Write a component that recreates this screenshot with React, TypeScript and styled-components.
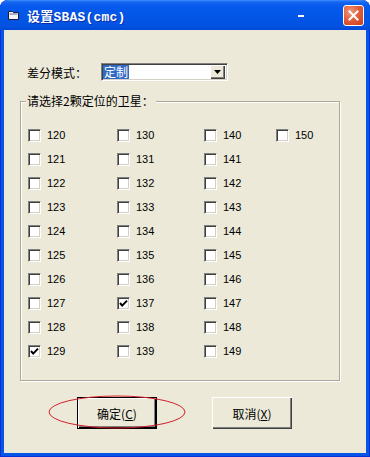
import React from 'react';
import styled, { createGlobalStyle } from 'styled-components';

const Global = createGlobalStyle`
  html, body { margin: 0; padding: 0; background: #ffffff; }
  body { width: 370px; height: 457px; overflow: hidden; font-family: "Noto Sans CJK SC", "Liberation Sans", sans-serif; }
  * { box-sizing: border-box; }
`;

const Window = styled.div`
  width: 370px;
  height: 457px;
  display: flex;
  flex-direction: column;
  padding: 0 4px 4px 4px;
  background: #0655E6;
  border-radius: 8px 8px 0 0;
  box-shadow: inset 1px 0 #0831D9, inset -1px 0 #0831D9, inset 0 -1px #0831D9;
  overflow: hidden;
`;

const TitleBar = styled.div`
  height: 30px;
  margin: 0 -4px;
  padding: 0 6px 0 6px;
  display: flex;
  align-items: center;
  border-radius: 8px 8px 0 0;
  background: linear-gradient(to bottom, #3D8EFF 0px, #1666F0 2px, #0659EC 6px, #0256E8 16px, #0352E2 26px, #0049D8 30px);
`;

const TitleIcon = styled.span`
  width: 16px;
  height: 16px;
  display: flex;
  align-items: center;
  justify-content: center;
  margin-right: 5px;
`;

const TitleText = styled.span`
  flex: 1;
  color: #ffffff;
  font-family: "Liberation Mono", "Noto Sans CJK SC", monospace;
  font-weight: bold;
  font-size: 13px;
  letter-spacing: 0.2px;
  text-shadow: 1px 1px 0 #0A2FA8;
  white-space: nowrap;
`;

const MinDash = styled.span`
  width: 6px;
  height: 2px;
  background: #ffffff;
  margin-right: 39px;
  margin-top: 2px;
`;

const CloseBtn = styled.span`
  width: 21px;
  height: 21px;
  border: 1px solid #ffffff;
  border-radius: 3px;
  display: flex;
  align-items: center;
  justify-content: center;
  background: radial-gradient(circle at 35% 30%, #F09A7C 0%, #E2603E 45%, #C8391A 100%);
`;

const Client = styled.div`
  flex: 1;
  background: #ECE9D8;
  display: flex;
  flex-direction: column;
  padding: 33px 0 0 0;
`;

const ModeRow = styled.div`
  display: flex;
  align-items: center;
  height: 18px;
  padding-left: 23px;
`;

const Label = styled.span`
  width: 74px;
  font-size: 12px;
  color: #000000;
  white-space: nowrap;
`;

const Combo = styled.div`
  width: 127px;
  height: 18px;
  display: flex;
  align-items: center;
  background: #ffffff;
  border-top: 1px solid #808080;
  border-left: 1px solid #808080;
  border-right: 1px solid #ffffff;
  border-bottom: 1px solid #ffffff;
  box-shadow: inset 1px 1px #404040, inset -1px -1px #D4D0C8;
  padding: 1px 2px 1px 1px;
`;

const Selected = styled.span`
  background: #316AC5;
  color: #ffffff;
  font-size: 12px;
  line-height: 14px;
  height: 14px;
  padding: 0 1px;
`;

const Spacer = styled.span`
  flex: 1;
`;

const DropBtn = styled.span`
  width: 15px;
  height: 14px;
  display: flex;
  align-items: center;
  justify-content: center;
  background: #ECE9D8;
  box-shadow: inset 1px 1px #ffffff, inset -1px -1px #404040, inset -2px -2px #808080;
`;

const Group = styled.fieldset`
  margin: 12px 0 0 16px;
  width: 320px;
  height: 288px;
  padding: 0 0 0 6px;
  border: 1px solid #ACA899;
  box-shadow: inset 1px 1px 0 #ffffff, 1px 1px 0 #ffffff;
  min-width: 0;
`;

const Legend = styled.legend`
  padding: 0 2px 0 1px;
  margin-left: -1px;
  font-size: 12px;
  line-height: 16px;
  color: #000000;
  background: #ECE9D8;
  position: relative;
`;

const Grid = styled.div`
  display: grid;
  grid-auto-flow: column;
  grid-template-rows: repeat(10, 24px);
  grid-template-columns: 89px 87px 72px 60px;
  padding-top: 14px;
  padding-left: 1px;
`;

const Item = styled.label`
  display: flex;
  align-items: center;
  height: 24px;
  font-family: "Liberation Sans", Arial, sans-serif;
  font-size: 11px;
  color: #000000;
`;

const Box = styled.span`
  width: 13px;
  height: 13px;
  flex: none;
  margin-right: 6px;
  background: #ffffff;
  border-top: 1px solid #808080;
  border-left: 1px solid #808080;
  border-right: 1px solid #ffffff;
  border-bottom: 1px solid #ffffff;
  box-shadow: inset 1px 1px #404040, inset -1px -1px #D4D0C8;
  display: flex;
  align-items: center;
  justify-content: center;
`;

const ButtonRow = styled.div`
  display: flex;
  gap: 55px;
  padding: 16px 0 0 73px;
`;

const ButtonWrap = styled.span`
  position: relative;
  display: inline-flex;
`;

const Button = styled.button<{ $default?: boolean }>`
  width: 80px;
  height: 32px;
  padding: 0;
  font-family: "Noto Sans CJK SC", sans-serif;
  font-size: 12px;
  color: #000000;
  background: #ECE9D8;
  border: ${(p) => (p.$default ? '1px solid #000000' : 'none')};
  box-shadow: ${(p) =>
    p.$default
      ? 'inset 1px 1px #ffffff, inset -1px -1px #000000, inset -2px -2px #808080'
      : 'inset 1px 1px #ffffff, inset -1px -1px #404040, inset -2px -2px #808080'};
  u { text-decoration: underline; }
`;

const Ring = styled.svg`
  position: absolute;
  left: -30px;
  top: -3px;
  pointer-events: none;
  overflow: visible;
`;

const Check = () => (
  <svg width="9" height="9" viewBox="0 0 9 9">
    <polyline points="1,4 3.2,6.6 8,1.6" fill="none" stroke="#000" strokeWidth="2" />
  </svg>
);

const sats = [
  ...Array.from({ length: 10 }, (_, i) => 120 + i),
  ...Array.from({ length: 10 }, (_, i) => 130 + i),
  ...Array.from({ length: 10 }, (_, i) => 140 + i),
  150,
];
const checked = new Set([129, 137]);

export default function App() {
  return (
    <>
      <Global />
      <Window>
        <TitleBar>
          <TitleIcon>
            <svg width="12" height="10" viewBox="0 0 12 10">
              <path d="M0.5 1.5 H4.5 L5.5 2.5 H10.5 V9.5 H0.5 Z" fill="#F4F4F4" stroke="#1A1A40" strokeWidth="1" />
              <rect x="1.5" y="3.5" width="8" height="1" fill="#5A6A9A" />
            </svg>
          </TitleIcon>
          <TitleText>设置SBAS(cmc)</TitleText>
          <MinDash />
          <CloseBtn>
            <svg width="11" height="11" viewBox="0 0 11 11">
              <path d="M1.5 1.5 L9.5 9.5 M9.5 1.5 L1.5 9.5" stroke="#ffffff" strokeWidth="2" strokeLinecap="square" />
            </svg>
          </CloseBtn>
        </TitleBar>
        <Client>
          <ModeRow>
            <Label>差分模式：</Label>
            <Combo>
              <Selected>定制</Selected>
              <Spacer />
              <DropBtn>
                <svg width="7" height="4" viewBox="0 0 7 4">
                  <path d="M0 0 H7 L3.5 4 Z" fill="#000" />
                </svg>
              </DropBtn>
            </Combo>
          </ModeRow>
          <Group>
            <Legend>请选择2颗定位的卫星：</Legend>
            <Grid>
              {sats.map((n) => (
                <Item key={n}>
                  <Box>{checked.has(n) && <Check />}</Box>
                  {n}
                </Item>
              ))}
            </Grid>
          </Group>
          <ButtonRow>
            <ButtonWrap>
              <Button $default>
                确定(<u>C</u>)
              </Button>
              <Ring width="140" height="36" viewBox="0 0 140 36">
                <ellipse cx="70" cy="18" rx="68" ry="16" fill="none" stroke="#D0202C" strokeWidth="1" />
              </Ring>
            </ButtonWrap>
            <ButtonWrap>
              <Button>
                取消(<u>X</u>)
              </Button>
            </ButtonWrap>
          </ButtonRow>
        </Client>
      </Window>
    </>
  );
}
